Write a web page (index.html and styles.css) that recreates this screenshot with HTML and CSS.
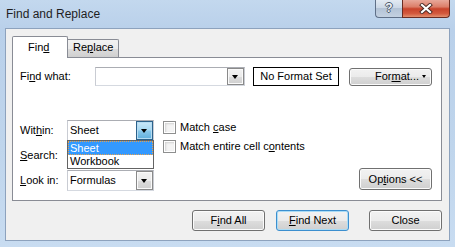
FILE: index.html
```html
<!DOCTYPE html>
<html lang="en">
<head>
    <meta charset="UTF-8">
    <title>Find and Replace</title>
    <link rel="stylesheet" href="styles.css">
</head>
<body>
    <div class="window">
        <div class="titlebar">
            <span class="title">Find and Replace</span>
            <div class="caption">
                <div class="cap help"><span class="help-glyph">?</span></div>
                <div class="cap close">
                    <svg width="14" height="11" viewBox="0 0 14 11">
                        <path d="M3 2 L11 9 M11 2 L3 9" stroke="#4a2a24" stroke-width="4" stroke-linecap="square"/>
                        <path d="M3 2 L11 9 M11 2 L3 9" stroke="#fff" stroke-width="2.2" stroke-linecap="square"/>
                    </svg>
                </div>
            </div>
        </div>

        <div class="client">
            <div class="tabs">
                <div class="tab active">Fin<u>d</u></div>
                <div class="tab inactive">Re<u>p</u>lace</div>
            </div>

            <div class="panel">
                <div class="find-row">
                    <span class="lbl find-lbl">Fi<u>n</u>d what:</span>
                    <div class="combo find-combo">
                        <span class="combo-text"></span>
                        <span class="drop"></span>
                    </div>
                    <div class="format-box">No Format Set</div>
                    <div class="btn format-btn">
                        <span>For<u>m</u>at...</span>
                        <span class="small-arrow"></span>
                    </div>
                </div>

                <div class="options">
                    <span class="lbl row1">Wit<u>h</u>in:</span>
                    <div class="combo row1 col2">
                        <span class="combo-text">Sheet</span>
                        <span class="drop hot"></span>
                        <div class="list">
                            <div class="item selected">Sheet</div>
                            <div class="item">Workbook</div>
                        </div>
                    </div>

                    <span class="lbl row2"><u>S</u>earch:</span>
                    <div class="combo row2 col2">
                        <span class="combo-text"></span>
                        <span class="drop"></span>
                    </div>

                    <span class="lbl row3"><u>L</u>ook in:</span>
                    <div class="combo row3 col2">
                        <span class="combo-text">Formulas</span>
                        <span class="drop"></span>
                    </div>

                    <div class="checks">
                        <label class="check"><span class="box"></span><span>Match <u>c</u>ase</span></label>
                        <label class="check"><span class="box"></span><span>Match entire cell c<u>o</u>ntents</span></label>
                    </div>

                    <div class="btn options-btn"><span>Op<u>t</u>ions &lt;&lt;</span></div>
                </div>
            </div>

            <div class="actions">
                <div class="btn"><span>F<u>i</u>nd All</span></div>
                <div class="btn default find-next"><span><u>F</u>ind Next</span></div>
                <div class="btn">Close</div>
            </div>
        </div>
    </div>
</body>
</html>
```

FILE: styles.css
```css
* {
    margin: 0;
    padding: 0;
    box-sizing: border-box;
}

body {
    width: 455px;
    height: 247px;
    overflow: hidden;
    font-family: "Liberation Sans", Arial, sans-serif;
    font-size: 11px;
    line-height: 13px;
    color: #000;
}

u {
    text-underline-offset: 1px;
}

/* aero frame */
.window {
    height: 247px;
    display: flex;
    flex-direction: column;
    padding: 0 5px 6px;
    background: linear-gradient(to bottom, #c3d8ee 0%, #b9d0ea 12%, #bfd5ec 60%, #c8dcf1 100%);
}

.titlebar {
    height: 28px;
    display: flex;
    justify-content: space-between;
    align-items: flex-start;
}

.title {
    font-size: 12px;
    line-height: 14px;
    padding: 7px 0 0 1px;
    color: #1e1e1e;
}

.caption {
    display: flex;
}

.cap {
    height: 18px;
    display: flex;
    align-items: center;
    justify-content: center;
    border: 1px solid #5f7088;
    border-top: none;
}

.help {
    width: 27px;
    border-right: none;
    border-radius: 0 0 0 4px;
    background: linear-gradient(to bottom, #e2eaf3 0%, #ccd8e6 45%, #b3c3d6 50%, #c3d1e1 100%);
}

.help-glyph {
    font-weight: bold;
    font-size: 12px;
    color: #eef2f7;
    text-shadow: 1px 0 #4c596a, -1px 0 #4c596a, 0 1px #4c596a, 0 -1px #4c596a;
}

.close {
    width: 48px;
    border-color: #6a2c22;
    border-radius: 0 0 4px 0;
    background: linear-gradient(to bottom, #e8a89a 0%, #dc7e69 40%, #c8432b 52%, #d35a3e 80%, #e3906f 100%);
}

/* client area */
.client {
    flex: 1;
    background: #f0f0f0;
    border: 1px solid #8da2bd;
    padding: 7px 7px 0 6px;
}

.tabs {
    display: flex;
    align-items: flex-end;
    height: 22px;
    margin-bottom: -1px;
    position: relative;
    z-index: 1;
}

.tab {
    border: 1px solid #898c95;
    border-bottom: none;
}

.tab.active {
    width: 56px;
    height: 22px;
    background: #fff;
    padding: 4px 0 0 15px;
    border-radius: 2px 2px 0 0;
}

.tab.inactive {
    width: 51px;
    height: 18px;
    margin-bottom: 1px;
    border-left: none;
    padding: 1px 0 0 5px;
    border-radius: 0 2px 0 0;
    background: linear-gradient(to bottom, #f2f2f2 0%, #ebebeb 50%, #dddddd 51%, #cfcfcf 100%);
}

.panel {
    height: 144px;
    background: #fff;
    border: 1px solid #898c95;
    padding: 9px 9px 0 7px;
}

.find-row {
    display: flex;
    align-items: center;
    height: 19px;
}

.find-lbl {
    width: 75px;
}

.combo {
    position: relative;
    display: flex;
    align-items: stretch;
    background: #fff;
    border: 1px solid #abadb3;
    border-color: #abadb3 #c9ccd3 #d5d9e0 #c9ccd3;
}

.combo-text {
    flex: 1;
    padding-left: 2px;
    align-self: center;
}

.find-combo {
    width: 150px;
    height: 19px;
}

.drop {
    width: 17px;
    position: relative;
    border: 1px solid #8a8a8a;
    box-shadow: inset 0 0 0 1px #fafafa;
    background: linear-gradient(to bottom, #f2f2f2 0%, #ebebeb 50%, #dddddd 51%, #cfcfcf 100%);
}

.drop::after {
    content: "";
    position: absolute;
    left: 4px;
    top: 50%;
    margin-top: -2px;
    border-style: solid;
    border-width: 4px 3.5px 0;
    border-color: #000 transparent transparent;
}

.drop.hot {
    border-color: #2c628b;
    box-shadow: inset 0 0 0 1px #b6dcf2;
    background: linear-gradient(to bottom, #cbe8f8 0%, #a9d9f2 45%, #86c6e9 55%, #60afdd 100%);
}

.format-box {
    width: 86px;
    height: 19px;
    margin-left: 8px;
    border: 1px solid #000;
    text-align: center;
    line-height: 17px;
}

.btn {
    display: flex;
    align-items: center;
    justify-content: center;
    border: 1px solid #707070;
    border-radius: 3px;
    box-shadow: inset 0 0 0 1px #fbfbfb;
    background: linear-gradient(to bottom, #f2f2f2 0%, #ebebeb 50%, #dddddd 51%, #cfcfcf 100%);
}

.format-btn {
    width: 83px;
    height: 18px;
    margin-left: 10px;
    justify-content: flex-start;
    padding: 0 5px 0 25px;
}

.small-arrow {
    margin-left: auto;
    border-style: solid;
    border-width: 3px 2.5px 0;
    border-color: #000 transparent transparent;
}

/* lower options block */
.options {
    margin-top: 34px;
    display: grid;
    grid-template-columns: 47px 87px 1fr auto;
    grid-template-rows: 21px 21px 21px;
    row-gap: 4px;
}

.lbl {
    align-self: center;
}

.row1 { grid-row: 1; }
.row2 { grid-row: 2; }
.row3 { grid-row: 3; }
.col2 { grid-column: 2; }

.list {
    position: absolute;
    left: -1px;
    top: 100%;
    width: 87px;
    border: 1px solid #646464;
    background: #fff;
    z-index: 2;
}

.item {
    height: 13px;
    padding-left: 2px;
}

.item.selected {
    height: 14px;
    padding-left: 1px;
    background: #3399ff;
    color: #fff;
    border: 1px dotted #e9a24c;
    line-height: 12px;
}

.checks {
    grid-column: 3;
    grid-row: 1 / span 3;
    display: flex;
    flex-direction: column;
    gap: 6px;
    margin-left: 9px;
    padding-top: 1px;
}

.check {
    display: flex;
    align-items: center;
    gap: 4px;
}

.box {
    width: 13px;
    height: 13px;
    border: 1px solid #8e8f8f;
    background: #f4f4f4;
    box-shadow: inset 0 0 0 1px #fff, inset 1px 1px 2px 1px #d2d2d2;
}

.options-btn {
    grid-column: 4;
    grid-row: 3;
    align-self: end;
    width: 73px;
    height: 22px;
    margin-bottom: 1px;
}

/* dialog buttons */
.actions {
    display: flex;
    justify-content: flex-end;
    margin-top: 9px;
}

.actions .btn {
    width: 73px;
    height: 21px;
}

.actions .find-next {
    margin: 0 20px 0 11px;
}

.btn.default {
    border-color: #3c8fcf;
    box-shadow: inset 0 0 0 1px #aadcf6;
}
```
